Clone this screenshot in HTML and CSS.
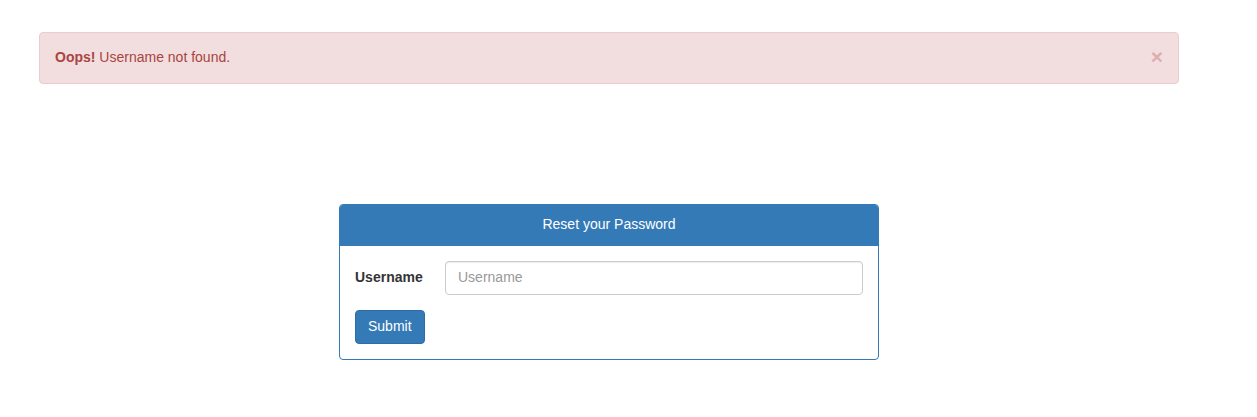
FILE: index.html
```html
<!DOCTYPE html>
<html>
<head>
<meta charset="utf-8">
<link rel="stylesheet" href="styles.css">
</head>
<body>
<div class="container">
  <div class="alert">
    <span><strong>Oops!</strong> Username not found.</span>
    <span class="close">×</span>
  </div>
  <div class="panel">
    <div class="panel-heading">Reset your Password</div>
    <div class="panel-body">
      <div class="form-row">
        <label class="label">Username</label>
        <input class="input" type="text" placeholder="Username">
      </div>
      <button class="btn">Submit</button>
    </div>
  </div>
</div>
</body>
</html>
```

FILE: styles.css
```css
* { box-sizing: border-box; }
html, body { margin: 0; padding: 0; background: #fff; }
body {
  font-family: "Liberation Sans", Arial, Helvetica, sans-serif;
  font-size: 14px;
  line-height: 20px;
  color: #333;
}
.container {
  width: 1140px;
  margin-left: 39px;
  padding-top: 32px;
}
.alert {
  display: flex;
  justify-content: space-between;
  align-items: center;
  height: 52px;
  padding: 14px 15px 16px;
  background: #f2dede;
  border: 1px solid #ebccd1;
  border-radius: 4px;
  color: #a94442;
}
.alert strong { font-weight: bold; }
.close {
  font-size: 21px;
  font-weight: bold;
  line-height: 20px;
  color: #a94442;
  opacity: 0.3;
  margin-right: 0;
}
.panel {
  width: 540px;
  margin: 120px auto 0;
  border: 1px solid #337ab7;
  border-radius: 4px;
  background: #fff;
}
.panel-heading {
  background: #337ab7;
  color: #fff;
  text-align: center;
  padding: 9px 15px 11px;
  border-bottom: 1px solid #337ab7;
  border-radius: 3px 3px 0 0;
}
.panel-body {
  padding: 15px;
  display: flex;
  flex-direction: column;
  align-items: flex-start;
  gap: 15px;
}
.form-row {
  display: flex;
  align-items: center;
  width: 100%;
}
.label {
  width: 90px;
  font-weight: bold;
  color: #333;
  padding-bottom: 2px;
}
.input {
  flex: 1;
  height: 34px;
  padding: 5px 12px 7px;
  font-family: inherit;
  font-size: 14px;
  color: #555;
  border: 1px solid #ccc;
  border-radius: 4px;
  box-shadow: inset 0 1px 1px rgba(0,0,0,.075);
  outline: none;
}
.input::placeholder { color: #999; }
.btn {
  height: 34px;
  padding: 5px 12px 7px;
  font-family: inherit;
  font-size: 14px;
  line-height: 20px;
  color: #fff;
  background: #337ab7;
  border: 1px solid #2e6da4;
  border-radius: 4px;
}
```
